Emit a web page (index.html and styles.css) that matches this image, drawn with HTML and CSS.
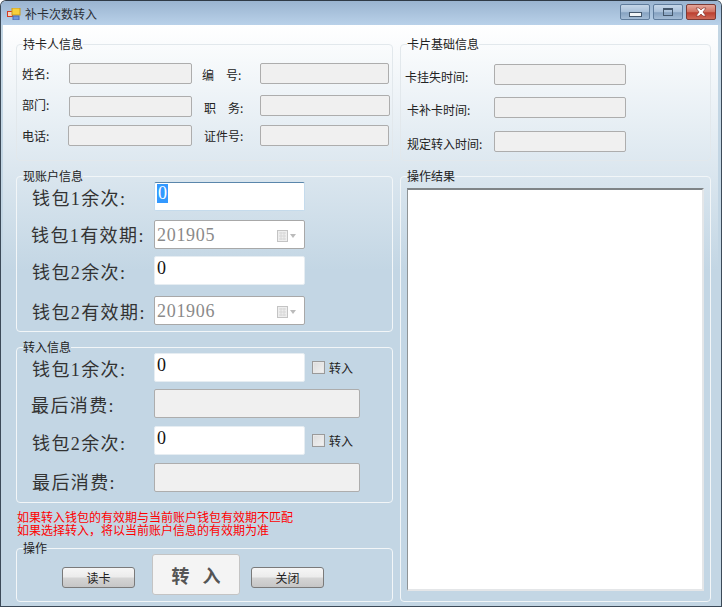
FILE: index.html
```html
<!DOCTYPE html>
<html lang="zh">
  <head>
    <meta charset="UTF-8" />
    <title>补卡次数转入</title>
    <link rel="stylesheet" href="styles.css">
  </head>
  <body>
    <div class="window">
      <div class="titlebar">
        <svg class="app-icon" width="14" height="12" viewBox="0 0 14 12">
          <rect x="0.5" y="3.5" width="5" height="5" fill="#f4d0c0" stroke="#d23a20" />
          <rect x="5" y="0" width="8" height="7" fill="#f6cf3c" stroke="#c99a1c" />
          <rect x="6" y="8" width="6" height="4" fill="#6f95dc" stroke="#4a6cb0" />
        </svg>
        <span class="title-text">补卡次数转入</span>
        <div class="win-buttons">
          <div class="win-btn"><span class="glyph-min"></span></div>
          <div class="win-btn"><span class="glyph-max"></span></div>
          <div class="win-btn close">
            <svg width="14" height="10" viewBox="0 0 14 10">
              <path d="M2 1h3l2 2 2-2h3L9 5l3 4H9L7 7 5 9H2l3-4z" fill="#fff" stroke="#7a2a22" stroke-width="0.6" />
            </svg>
          </div>
        </div>
      </div>

      <div class="client">
        <div class="column left">
          <fieldset class="group holder">
            <legend>持卡人信息</legend>
            <div class="holder-cols">
              <div class="holder-col first">
                <div class="row"><label class="lbl name">姓名:</label><div class="field off w123"></div></div>
                <div class="row mt12"><label class="lbl name lift">部门:</label><div class="field off w123"></div></div>
                <div class="row mt8"><label class="lbl name short">电话:</label><div class="field off w124"></div></div>
              </div>
              <div class="holder-col second">
                <div class="row"><label class="lbl code drop1">编　号:</label><div class="field off w129"></div></div>
                <div class="row mt10"><label class="lbl code inset drop3">职　务:</label><div class="field off w130"></div></div>
                <div class="row mt9"><label class="lbl code inset">证件号:</label><div class="field off w129"></div></div>
              </div>
            </div>
          </fieldset>

          <fieldset class="group account">
            <legend>现账户信息</legend>
            <div class="row tall first-tall"><label class="big">钱包1余次:</label><div class="field on focus"><span class="selected">0</span></div></div>
            <div class="row tall mt9"><label class="big nudge d1">钱包1有效期:</label><div class="field date">201905<svg class="cal" width="20" height="14" viewBox="0 0 20 14"><rect x="0.5" y="1.5" width="10" height="11" fill="#eee" stroke="#c4c4c4" /><path d="M2 4h7M2 7h7M2 10h7M4 3v8M7 3v8" stroke="#d8d8d8" /><path d="M13 5h6l-3 4z" fill="#bbb" /></svg></div></div>
            <div class="row tall mt7"><label class="big">钱包2余次:</label><div class="field on">0</div></div>
            <div class="row tall mt11"><label class="big">钱包2有效期:</label><div class="field date">201906<svg class="cal" width="20" height="14" viewBox="0 0 20 14"><rect x="0.5" y="1.5" width="10" height="11" fill="#eee" stroke="#c4c4c4" /><path d="M2 4h7M2 7h7M2 10h7M4 3v8M7 3v8" stroke="#d8d8d8" /><path d="M13 5h6l-3 4z" fill="#bbb" /></svg></div></div>
          </fieldset>

          <fieldset class="group transfer">
            <legend>转入信息</legend>
            <div class="row tall first-transfer"><label class="big">钱包1余次:</label><div class="field on">0</div><span class="check"></span><span class="check-text">转入</span></div>
            <div class="row tall mt7"><label class="big nudge">最后消费:</label><div class="field off wide"></div></div>
            <div class="row tall mt8"><label class="big d3">钱包2余次:</label><div class="field on">0</div><span class="check"></span><span class="check-text">转入</span></div>
            <div class="row tall mt8"><label class="big d5">最后消费:</label><div class="field off wide"></div></div>
          </fieldset>

          <p class="warning">如果转入钱包的有效期与当前账户钱包有效期不匹配<br>如果选择转入，将以当前账户信息的有效期为准</p>

          <fieldset class="group actions">
            <legend>操作</legend>
            <div class="action-row">
              <button class="btn" type="button">读卡</button>
              <button class="btn-big" type="button">转 入</button>
              <button class="btn" type="button">关闭</button>
            </div>
          </fieldset>
        </div>

        <div class="column right">
          <fieldset class="group card">
            <legend>卡片基础信息</legend>
            <div class="row card-first"><label class="lbl card-lbl pull">卡挂失时间:</label><div class="field off w132"></div></div>
            <div class="row mt12"><label class="lbl card-lbl">卡补卡时间:</label><div class="field off w132"></div></div>
            <div class="row mt13"><label class="lbl card-lbl">规定转入时间:</label><div class="field off w132"></div></div>
          </fieldset>

          <fieldset class="group result">
            <legend>操作结果</legend>
            <div class="result-box"></div>
          </fieldset>
        </div>
      </div>
    </div>
  </body>
</html>
```

FILE: styles.css
```css
* {
  box-sizing: border-box;
}

body {
  margin: 0;
  font-family: "Noto Sans CJK SC", "Liberation Sans", sans-serif;
  font-size: 12px;
  color: #222;
  background: #fff;
}

.window {
  width: 722px;
  height: 607px;
  display: flex;
  flex-direction: column;
  overflow: hidden;
  border: 1px solid #3c4a58;
  border-top-color: #2f3a46;
  border-radius: 6px 6px 0 0;
  background: #c3d6e4;
}

/* title bar */
.titlebar {
  height: 24px;
  flex: none;
  display: flex;
  align-items: center;
  padding: 0 5px 0 6px;
  background: linear-gradient(#9ab4d0, #b9d1e9);
}

.app-icon {
  margin-top: 2px;
}

.title-text {
  margin-left: 4px;
  line-height: 14px;
  margin-top: 2px;
  color: #2a2f36;
}

.win-buttons {
  margin-left: auto;
  margin-top: -2px;
  display: flex;
  gap: 3px;
}

.win-btn {
  width: 30px;
  height: 16px;
  display: flex;
  align-items: center;
  justify-content: center;
  border: 1px solid #5f7c9c;
  border-radius: 2px;
  background: linear-gradient(#c5d6e8, #a9c0d9 50%, #86a2c1 55%, #a4bcd6);
}

.win-btn.close {
  border-color: #7c3a34;
  background: linear-gradient(#e4a79c, #d0705f 50%, #bb3f30 55%, #cf6a58);
}

.glyph-min {
  width: 13px;
  height: 5px;
  margin-top: 5px;
  border: 1px solid #44576c;
  background: #f2f5f8;
}

.glyph-max {
  width: 10px;
  height: 8px;
  border: 1px solid #44576c;
  border-top-width: 2px;
  background: transparent;
}

/* client area */
.client {
  flex: 1;
  margin: 0 3px 3px 2px;
  padding: 12px 7px 0 13px;
  display: flex;
  gap: 7px;
  background: linear-gradient(#fff 0, #c3d6e4 245px);
}

.column {
  display: flex;
  flex-direction: column;
}

.column.left {
  width: 377px;
}

.column.right {
  width: 311px;
}

.group {
  margin: 0;
  padding: 0;
  min-width: 0;
  border: 1px solid #f2f6f8;
  border-radius: 4px;
}

.group legend {
  margin-left: 6px;
  padding: 0;
  line-height: 14px;
  color: #222;
}

.holder {
  height: 124px;
  border-color: #e2e8ec;
}

.card {
  height: 124px;
  border-color: #e2e8ec;
}

.account {
  height: 163px;
  margin-top: 8px;
}

.transfer {
  height: 163px;
  margin-top: 8px;
}

.actions {
  height: 61px;
  margin-top: 5px;
}

.result {
  height: 433px;
  margin-top: 8px;
}

.result-box {
  width: 297px;
  height: 403px;
  margin: 5px 0 0 6px;
  background: #fff;
  border: 2px solid #e4e6e8;
  border-top-color: #7f8487;
  border-left-color: #8f9496;
  border-left-width: 1px;
}

/* rows */
.row {
  display: flex;
  align-items: center;
}

.row.tall {
  height: 29px;
  padding-left: 15px;
}

.first-tall {
  margin-top: -1px;
}

.first-transfer {
  margin-top: -1px;
}

.mt7 { margin-top: 7px; }
.mt8 { margin-top: 8px; }
.mt9 { margin-top: 9px; }
.mt10 { margin-top: 10px; }
.mt11 { margin-top: 11px; }
.mt12 { margin-top: 12px; }
.mt13 { margin-top: 13px; }

.holder-cols {
  display: flex;
  padding-top: 12px;
}

.holder-col.first {
  width: 185px;
  padding-left: 5px;
}

.holder-col.second {
  flex: 1;
}

.lbl {
  flex: none;
  line-height: 16px;
  white-space: nowrap;
}

.lbl.lift {
  margin-bottom: 4px;
}

.lbl.drop1 {
  margin-top: 2px;
}

.lbl.drop3 {
  margin-top: 6px;
}

.lbl.name {
  width: 47px;
}

.lbl.name.short {
  width: 46px;
}

.lbl.code {
  width: 58px;
}

.lbl.code.inset {
  padding-left: 2px;
}

.card-first {
  margin-top: 13px;
}

.lbl.card-lbl {
  width: 93px;
  padding-left: 6px;
  margin-top: 4px;
}

.lbl.card-lbl.pull {
  padding-left: 4px;
}

.big {
  flex: none;
  width: 122px;
  margin-top: 4px;
  font-family: "Liberation Serif", "Noto Sans CJK SC", serif;
  font-size: 18px;
  letter-spacing: 1.4px;
  line-height: 24px;
  color: #333;
  white-space: nowrap;
}

.big.d1 { margin-top: 2px; }
.big.d3 { margin-top: 6px; }
.big.d5 { margin-top: 10px; }

.big.nudge {
  margin-left: -1px;
  margin-right: 1px;
}

/* fields */
.field {
  flex: none;
  height: 21px;
  border-radius: 2px;
}

.field.off {
  background: #f0f0f0;
  border: 1px solid #adadad;
}

.w123 { width: 123px; }
.w124 { width: 124px; }
.w129 { width: 129px; }
.w130 { width: 130px; }
.w132 { width: 132px; }

.row.tall .field {
  height: 29px;
}

.field.wide {
  width: 206px;
}

.field.on,
.field.date {
  width: 151px;
  padding-left: 2px;
  font-family: "Liberation Serif", serif;
  font-size: 18px;
  line-height: 23px;
}

.field.on {
  background: #fff;
  border: 1px solid #e6edf2;
  color: #111;
}

.field.focus {
  border-color: #c5dbec;
  border-top-color: #5a86ab;
}

.selected {
  display: inline-block;
  width: 11px;
  padding-left: 1px;
  line-height: 19px;
  margin-top: 1px;
  vertical-align: top;
  background: #3399ff;
  color: #fff;
}

.field.date {
  display: flex;
  align-items: center;
  padding-top: 2px;
  background: #fff;
  border: 1px solid #a8a8a8;
  color: #8a8a8a;
  letter-spacing: 0.7px;
  line-height: 25px;
}

.cal {
  margin-left: auto;
  margin-right: 7px;
}

.check {
  width: 13px;
  height: 13px;
  margin-left: 7px;
  border: 1px solid #9a9a9a;
  background: linear-gradient(135deg, #dcdcdc, #f2f2f2);
  box-shadow: inset 0 0 0 1px #e8e8e8;
}

.check-text {
  margin-left: 4px;
  color: #222;
}

/* warning */
.warning {
  margin: 7px 0 0 1px;
  line-height: 13px;
  color: #f00;
}

/* buttons */
.action-row {
  display: flex;
  align-items: center;
  padding: 0 0 0 45px;
  margin-top: -1px;
}

.btn {
  width: 73px;
  height: 21px;
  margin-top: 6px;
  padding: 0;
  font: inherit;
  color: #222;
  border: 1px solid #7a7a7a;
  border-radius: 3px;
  background: linear-gradient(#f6f6f6, #ececec 45%, #d4d4d4 55%, #c6c6c6);
}

.btn-big {
  width: 88px;
  height: 41px;
  margin: 0 11px 0 17px;
  padding: 0;
  font-family: "Noto Sans CJK SC", sans-serif;
  font-size: 18px;
  font-weight: bold;
  word-spacing: 9px;
  color: #555;
  border: 1px solid #c4c4c4;
  border-radius: 3px;
  background: #f4f4f4;
}
```
